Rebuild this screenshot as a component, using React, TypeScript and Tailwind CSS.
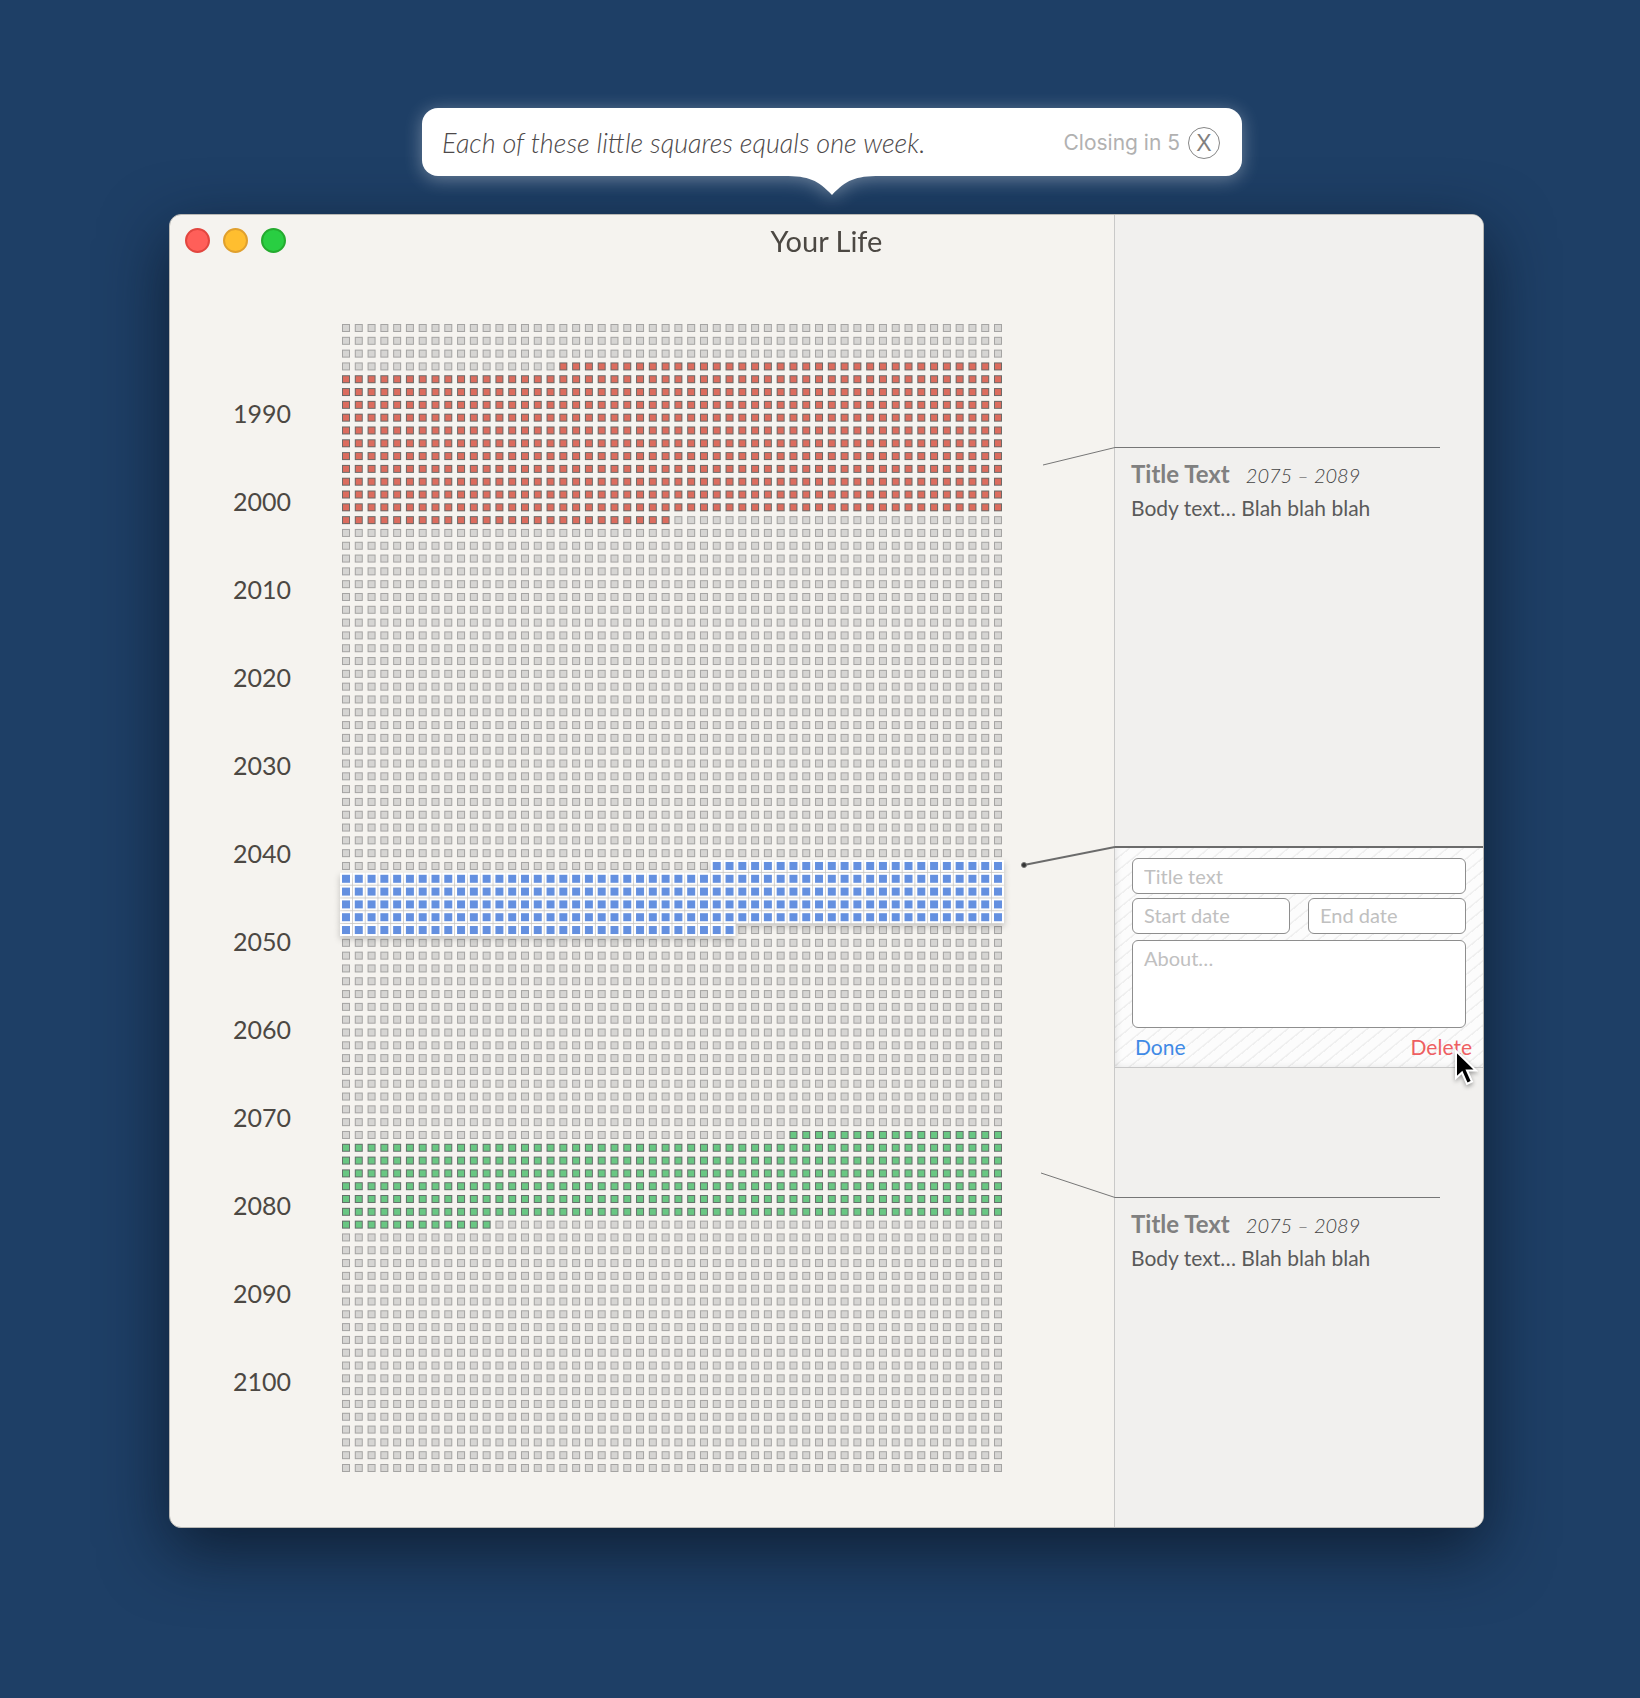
import React from "react";

const COLUMNS = 52;
const ROWS = 90;
const CELL = 8;
const CHART_WIDTH = 660;
const CHART_HEIGHT = 1148;
const PITCH_X = (CHART_WIDTH - CELL) / (COLUMNS - 1);
const PITCH_Y = (CHART_HEIGHT - CELL) / (ROWS - 1);

type Tone = "empty" | "red" | "blue" | "green";

const tones: Record<Tone, { fill: string; stroke: string }> = {
  empty: { fill: "#d6d5d3", stroke: "#a5a4a3" },
  red: { fill: "#dc6c5e", stroke: "#6c6967" },
  blue: { fill: "#6490e0", stroke: "#6490e0" },
  green: { fill: "#69c783", stroke: "#64706a" },
};

const week = (row: number, column: number) => row * COLUMNS + column;

const periods: { tone: Tone; from: number; to: number }[] = [
  { tone: "red", from: week(3, 17), to: week(15, 25) },
  { tone: "blue", from: week(42, 29), to: week(47, 30) },
  { tone: "green", from: week(63, 35), to: week(70, 11) },
];

const years = [1990, 2000, 2010, 2020, 2030, 2040, 2050, 2060, 2070, 2080, 2090, 2100];

function toneOf(index: number): Tone {
  return periods.find((p) => index >= p.from && index <= p.to)?.tone ?? "empty";
}

function WeekChart() {
  const weeks = Array.from({ length: COLUMNS * ROWS }, (_, i) => ({
    x: (i % COLUMNS) * PITCH_X,
    y: Math.floor(i / COLUMNS) * PITCH_Y,
    tone: toneOf(i),
    i,
  }));
  const plain = weeks.filter((w) => w.tone !== "blue");
  const active = weeks.filter((w) => w.tone === "blue");
  const activeRows = Array.from(new Set(active.map((w) => w.y)));
  return (
    <svg
      viewBox={`0 0 ${CHART_WIDTH} ${CHART_HEIGHT}`}
      className="block w-full max-w-[660px] overflow-visible"
      role="img"
      aria-label="Weeks of your life"
    >
      {plain.map((w) => (
        <g key={w.i}>
          <rect x={w.x} y={w.y} width={CELL} height={CELL} fill={tones[w.tone].stroke} />
          <rect x={w.x + 1} y={w.y + 1} width={CELL - 2} height={CELL - 2} fill={tones[w.tone].fill} />
        </g>
      ))}
      {activeRows.map((y) => (
        <g key={y} className="[filter:drop-shadow(0_3px_3px_rgba(0,0,0,0.22))]">
          {active
            .filter((w) => w.y === y)
            .map((w) => (
              <g key={w.i}>
                <rect x={w.x - 2} y={w.y - 2} width={CELL + 4} height={CELL + 4} fill="#fff" />
                <rect x={w.x} y={w.y} width={CELL} height={CELL} fill={tones.blue.fill} />
              </g>
            ))}
        </g>
      ))}
    </svg>
  );
}

function Bubble() {
  return (
    <div className="relative flex h-[68px] w-[820px] items-center justify-between rounded-2xl bg-white pt-0.5 pr-[22px] pl-5 [filter:drop-shadow(0_3px_9px_rgba(255,255,255,0.35))]">
      <p className="text-[27px] leading-8 font-light whitespace-nowrap text-[#4d494a] italic">
        Each of these little squares equals one week.
      </p>
      <div className="flex items-center gap-2 text-[#b1b1b1]">
        <span className="font-[Inter,sans-serif] text-[21px]">Closing in 5</span>
        <button
          type="button"
          aria-label="Close"
          className="flex size-8 items-center justify-center rounded-full border border-[#868686] font-['Liberation_Sans',sans-serif] text-[23px] leading-none text-[#808080]"
        >
          X
        </button>
      </div>
      <svg viewBox="0 0 96 20" className="absolute top-[67px] left-1/2 h-5 w-24 -translate-x-1/2" aria-hidden="true">
        <path d="M0 0V1C25 1 34 5 48 20C62 5 71 1 96 1V0Z" fill="#fff" />
      </svg>
    </div>
  );
}

function Note({ rise }: { rise: "below" | "above" }) {
  return (
    <article className="relative mr-[43px] h-[88px] border-t border-[#767676] pt-[10px] pl-4">
      {rise === "below" ? (
        <svg viewBox="0 0 72 20" className="absolute -top-px -left-[72px] h-5 w-[72px]" aria-hidden="true">
          <path d="M0 18L72 .5" stroke="#767676" fill="none" />
        </svg>
      ) : (
        <svg viewBox="0 0 74 26" className="absolute -top-[26px] -left-[74px] h-[26px] w-[74px]" aria-hidden="true">
          <path d="M0 1L74 25.5" stroke="#767676" fill="none" />
        </svg>
      )}
      <div className="flex items-baseline gap-4 whitespace-nowrap">
        <h2 className="text-2xl leading-8 font-bold text-[#808080]">Title Text</h2>
        <p className="text-xl leading-8 font-light text-[#444] italic">2075 – 2089</p>
      </div>
      <p className="mt-[3px] text-[21px] leading-7 whitespace-nowrap text-[#5a5a5a]">Body text… Blah blah blah</p>
    </article>
  );
}

const field =
  "block w-full min-w-0 rounded-md border border-[#8e8e8e] bg-white px-[11px] text-xl text-[#555] placeholder:text-[#c0c0c0] placeholder:opacity-100 outline-none";

function EventForm() {
  return (
    <form
      onSubmit={(e) => e.preventDefault()}
      className="relative border-t-2 border-b border-t-[#6b6b6b] border-b-[#c8c8c8] bg-[#fcfcfc] bg-[repeating-linear-gradient(141deg,transparent_0px,transparent_8px,#efefef_9px,#efefef_10px)] pt-[10px] pr-[17px] pb-1.5 pl-[17px] shadow-[inset_5px_0_6px_-3px_rgba(0,0,0,0.08),inset_0_-5px_6px_-3px_rgba(0,0,0,0.05)]"
    >
      <svg viewBox="0 0 96 26" className="absolute -top-[3px] -left-24 h-[26px] w-24" aria-hidden="true">
        <path d="M5 20L96 2" stroke="#6b6b6b" strokeWidth="2" fill="none" />
        <circle cx="5" cy="20" r="2.5" fill="#333" stroke="#777" />
      </svg>
      <input aria-label="Title text" placeholder="Title text" className={`${field} h-9`} />
      <div className="mt-1 grid grid-cols-2 gap-[18px]">
        <input aria-label="Start date" placeholder="Start date" className={`${field} h-9 pb-0.5`} />
        <input aria-label="End date" placeholder="End date" className={`${field} h-9 pb-0.5`} />
      </div>
      <textarea aria-label="About" placeholder="About…" className={`${field} mt-1.5 h-[88px] resize-none pt-[3px]`} />
      <div className="mt-[5px] -mr-1.5 flex justify-between pl-[3px] text-[21px] leading-7">
        <button type="button" className="text-[#3f8ae6]">
          Done
        </button>
        <button type="button" className="text-[#ee5f62]">
          Delete
        </button>
      </div>
      <svg
        viewBox="0 0 24 40"
        className="absolute right-[5px] -bottom-[21px] h-10 w-6 [filter:drop-shadow(0_2px_2px_rgba(0,0,0,0.35))]"
        aria-hidden="true"
      >
        <path d="M2 3V30L8 24.500L13 36L18 33.500L13 22.500H22Z" fill="#000" stroke="#fff" strokeWidth="2" />
      </svg>
    </form>
  );
}

export default function App() {
  return (
    <div className="min-h-screen bg-[#1e3f66] pt-[108px] pr-[156px] pb-[170px] pl-[169px] font-[Lato,sans-serif] text-[#4c4843]">
      <div className="relative z-10 flex justify-center pl-[11px]">
        <Bubble />
      </div>

      <div className="mt-[38px] grid grid-cols-[minmax(0,1fr)_369px] grid-rows-[52px_auto] overflow-hidden rounded-xl border border-[#b9b8b4] bg-[#f5f3ef] shadow-[0_22px_66px_rgba(10,20,35,0.75)]">
        <header className="z-10 col-span-2 col-start-1 row-start-1 grid grid-cols-3 items-center px-[15px] pb-[2px]">
          <div className="flex gap-[13px]">
            <button type="button" aria-label="Close window" className="size-[25px] rounded-full border-2 border-[#e2463f] bg-[#ff5f59]" />
            <button type="button" aria-label="Minimize window" className="size-[25px] rounded-full border-2 border-[#e0a02e] bg-[#ffbe2f]" />
            <button type="button" aria-label="Zoom window" className="size-[25px] rounded-full border-2 border-[#24ab2f] bg-[#29ce42]" />
          </div>
          <h1 className="text-center text-[29px] leading-none">Your Life</h1>
        </header>

        <main className="col-start-1 row-start-2 flex pt-[57px] pr-28 pb-[55px]">
          <ol className="mt-[46px] w-[172px] shrink-0 pl-[63px] text-[25px]">
            {years.map((year) => (
              <li key={year} className="flex h-[88px] items-center">
                {year}
              </li>
            ))}
          </ol>
          <div className="min-w-0 flex-1">
            <WeekChart />
          </div>
        </main>

        <aside className="col-start-2 row-span-2 row-start-1 border-l border-[#c9c9c8] bg-[#f1f0ee] pt-[232px]">
          <Note rise="below" />
          <div className="mt-[311px]">
            <EventForm />
          </div>
          <div className="mt-[129px]">
            <Note rise="above" />
          </div>
        </aside>
      </div>
    </div>
  );
}
